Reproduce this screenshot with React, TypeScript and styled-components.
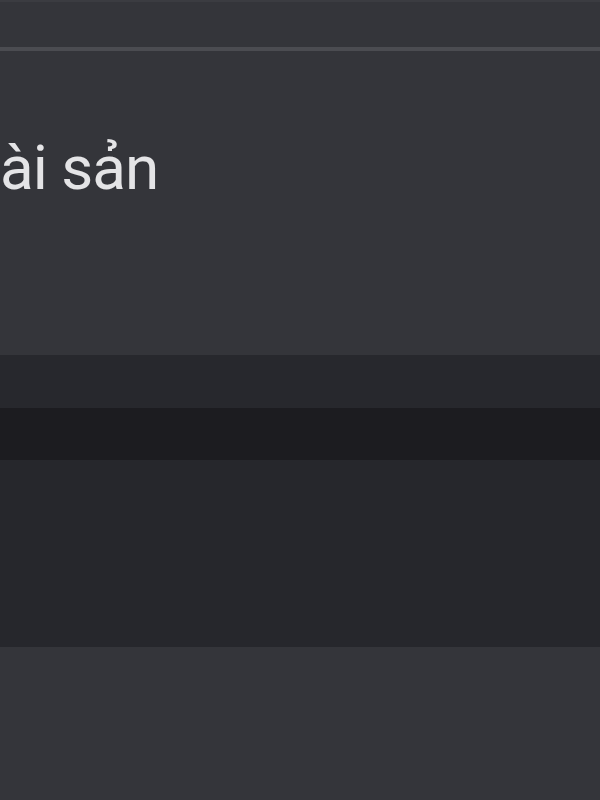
import styled, { createGlobalStyle } from "styled-components";

const GlobalStyle = createGlobalStyle`
  html, body {
    margin: 0;
    padding: 0;
    background: #34353a;
  }
  body {
    font-family: Roboto, "Noto Sans", sans-serif;
  }
`

const Screen = styled.div`
  width: 600px;
  height: 800px;
  display: flex;
  flex-direction: column;
  background: #34353a;
  overflow: hidden;
`

const TopBar = styled.div`
  height: 45px;
  background: #34353a;
  border-top: 2px solid #3b3c41;
`

const Divider = styled.div`
  height: 4px;
  background: #4b4c51;
`

const Header = styled.div`
  height: 304px;
  display: flex;
  align-items: flex-start;
  background: #34353a;
`

const Title = styled.h1`
  margin: 0;
  padding-top: 86px;
  font-size: 62px;
  font-weight: 400;
  line-height: 1;
  color: #e4e4e6;
  letter-spacing: -1px;
`

const Band = styled.div<{ $h: number; $bg: string }>`
  height: ${({ $h }) => $h}px;
  background: ${({ $bg }) => $bg};
`

const Footer = styled.div`
  flex: 1;
  background: #34353a;
`

const App: React.FC = () => {
  return (
    <>
      <GlobalStyle />
      <Screen>
        <TopBar />
        <Divider />
        <Header>
          <Title>ài sản</Title>
        </Header>
        <Band $h={53} $bg="#27282d" />
        <Band $h={52} $bg="#1c1c20" />
        <Band $h={187} $bg="#26272c" />
        <Footer />
      </Screen>
    </>
  )
}

export default App;
